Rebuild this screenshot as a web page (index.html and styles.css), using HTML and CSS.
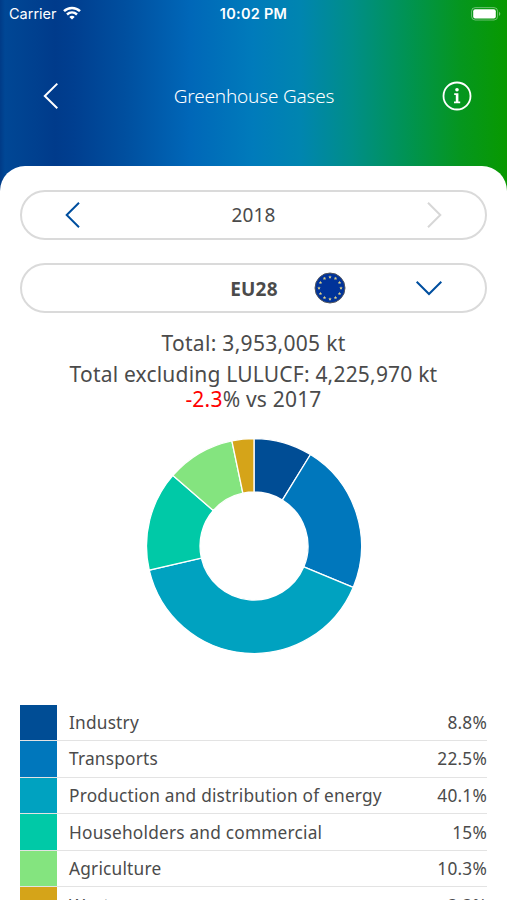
FILE: index.html
```html
<!DOCTYPE html>
<html lang="en">
<head>
    <meta charset="UTF-8">
    <meta name="viewport" content="width=device-width, initial-scale=1.0">
    <title>Greenhouse Gases</title>
    <link rel="stylesheet" href="styles.css">
</head>
<body>
    <header class="header">
        <div class="status-bar">
            <div class="carrier">
                <span class="carrier-name">Carrier</span>
                <svg class="wifi" width="18" height="14" viewBox="0 0 18 14" fill="none" stroke="#fff" stroke-width="2.5">
                    <path d="M1 5.2C5.4 .8 12.6 .8 17 5.2"/>
                    <path d="M4 8.5C6.9 5.9 11.1 5.9 14 8.5"/>
                    <path d="M9 13.6L6.3 10.9C7.8 9.5 10.2 9.5 11.7 10.9Z" fill="#fff" stroke="none"/>
                </svg>
            </div>
            <span class="time">10:02 PM</span>
            <div class="battery">
                <svg width="30" height="14" viewBox="0 0 30 14">
                    <rect x=".6" y=".6" width="26" height="12.4" rx="3.6" fill="none" stroke="#fff" stroke-opacity=".4"/>
                    <rect x="2.2" y="2.2" width="22.6" height="9.2" rx="2" fill="#fff"/>
                    <path d="M28 4.7C29.8 5.5 29.8 8.1 28 8.9Z" fill="#fff" fill-opacity=".45"/>
                </svg>
            </div>
        </div>
        <nav class="nav">
            <svg class="back" width="16" height="28" viewBox="0 0 16 28" fill="none" stroke="#fff" stroke-width="2">
                <path d="M14.3 1.6L1.8 14L14.3 26.2"/>
            </svg>
            <h1><span class="title">Greenhouse Gases</span></h1>
            <svg class="info" width="30" height="30" viewBox="0 0 30 30">
                <circle cx="15" cy="15" r="13.5" fill="none" stroke="#fff" stroke-width="1.8"/>
                <circle cx="15" cy="8.8" r="1.8" fill="#fff"/>
                <path d="M12.2 12.2H16.4V20.5H18.2V22.3H12V20.5H13.8V14H12.2Z" fill="#fff"/>
            </svg>
        </nav>
    </header>

    <main class="sheet">
        <div class="picker">
            <svg width="16" height="28" viewBox="0 0 16 28" fill="none" stroke="#004f9f" stroke-width="2">
                <path d="M14 1.7L1.7 14L14 26.3"/>
            </svg>
            <span class="year">2018</span>
            <svg width="16" height="28" viewBox="0 0 16 28" fill="none" stroke="#d7d7d7" stroke-width="2">
                <path d="M2 1.7L14.3 14L2 26.3"/>
            </svg>
        </div>
        <div class="picker picker-region">
            <span class="region">EU28</span>
            <svg class="flag" width="32" height="32" viewBox="-16 -16 32 32">
                <circle r="15" fill="#039" stroke="#53565d" stroke-width="1"/>
                <g id="stars" fill="#d9cf8a"></g>
            </svg>
            <svg class="down" width="28" height="16" viewBox="0 0 28 16" fill="none" stroke="#004f9f" stroke-width="2">
                <path d="M1.7 1.7L14 14L26.3 1.7"/>
            </svg>
        </div>

        <div class="totals">
            <p><span class="total">Total: 3,953,005 kt</span></p>
            <p><span class="excluding">Total excluding LULUCF: 4,225,970 kt</span></p>
            <p class="change"><span class="versus"><span class="negative">-2.3</span>% vs 2017</span></p>
        </div>

        <svg class="chart" id="chart" width="216" height="216" viewBox="-108 -108 216 216"></svg>

        <ul class="legend" id="legend"></ul>
    </main>

    <script src="script.js"></script>
</body>
</html>
```
FILE: styles.css
```css
* {
    box-sizing: border-box;
}
body {
    margin: 0;
    height: 900px;
    overflow: hidden;
    font-family: "Noto Sans", sans-serif;
    color: #4b4b4b;
    background: linear-gradient(90deg, #003b87 0, #004795 5px, #00408f 36px, #003b8b 55px, #003f90 75px, #004f9f 125px, #0067b8 190px, #007bbb 253px, #0085b0 300px, #008e88 352px, #009355 405px, #05961f 460px, #089900 507px);
}
svg {
    display: block;
    flex: none;
}
.header {
    height: 166px;
    color: #fff;
}
.status-bar {
    display: grid;
    grid-template-columns: 1fr auto 1fr;
    align-items: center;
    height: 27px;
    padding: 0 6px 0 9px;
    font-family: Inter, sans-serif;
    font-size: 14.5px;
}
.carrier {
    display: flex;
    align-items: center;
    gap: 6px;
}
.carrier-name {
    letter-spacing: 0;
}
.wifi {
    margin-top: -2px;
}
.time {
    margin-left: -3px;
    font-weight: 600;
    letter-spacing: 0.25px;
}
.battery {
    display: flex;
    justify-content: flex-end;
}
.nav {
    display: grid;
    grid-template-columns: 30px 1fr 30px;
    align-items: center;
    margin-top: 54px;
    padding: 0 35px 0 43px;
}
.nav h1 {
    margin: 0;
    padding-right: 7px;
    font-size: 19px;
    font-weight: 300;
    line-height: 30px;
    letter-spacing: -0.2px;
    text-align: center;
}
.sheet {
    height: 734px;
    padding: 24px 20px 0;
    background: #fff;
    border-radius: 25px 25px 0 0;
    overflow: hidden;
}
.picker {
    display: flex;
    align-items: center;
    justify-content: space-between;
    height: 50px;
    padding: 0 43px;
    border: 2px solid #dadada;
    border-radius: 25px;
    font-size: 19px;
}
.year {
    letter-spacing: 0.1px;
}
.picker-region {
    display: grid;
    grid-template-columns: 1fr auto 1fr;
    margin-top: 23px;
    padding-right: 42px;
    position: relative;
}
.region {
    grid-column: 2;
    padding-top: 1px;
    font-weight: 700;
    letter-spacing: 0.2px;
}
.flag {
    position: absolute;
    left: 292px;
    top: 7px;
}
.down {
    justify-self: end;
}
.totals {
    margin-top: 15px;
    font-size: 21px;
    line-height: 31px;
    letter-spacing: 0.2px;
    text-align: center;
    white-space: nowrap;
}
.totals p {
    margin: 0;
}
.total {
    letter-spacing: 0.3px;
}
.totals .change {
    line-height: 19px;
}
.negative {
    color: #f00;
}
.chart {
    margin: 28.5px auto 0;
}
.legend {
    margin: 51px 0 0;
    padding: 0;
    list-style: none;
    font-size: 17.3px;
    letter-spacing: 0.2px;
}
.legend li {
    display: flex;
    align-items: center;
    height: 36.6px;
    border-bottom: 1.4px solid #e3e3e3;
}
.swatch {
    width: 37px;
    height: 100%;
    margin-right: 12px;
}
.value {
    margin-left: auto;
}
```
FILE: script.js
```js
const sectors = [
    { name: "Industry", value: 8.8, color: "#004d95" },
    { name: "Transports", value: 22.5, color: "#0077bc" },
    { name: "Production and distribution of energy", value: 40.1, color: "#00a2c0" },
    { name: "Householders and commercial", value: 15, color: "#00c9a7" },
    { name: "Agriculture", value: 10.3, color: "#84e47f" },
    { name: "Waste", value: 3.3, color: "#d5a419" }
];

function point(radius, share) {
    const angle = share / 100 * 2 * Math.PI;
    return (radius * Math.sin(angle)).toFixed(2) + " " + (-radius * Math.cos(angle)).toFixed(2);
}

let start = 0;
let slices = "";
let rows = "";
sectors.forEach(sector => {
    const end = start + sector.value;
    slices += `<path fill="${sector.color}" stroke="#fff" stroke-width="1.3" d="M${point(107.5, start)}A107.5 107.5 0 0 1 ${point(107.5, end)}L${point(54, end)}A54 54 0 0 0 ${point(54, start)}Z"/>`;
    rows += `<li><span class="swatch" style="background:${sector.color}"></span><span class="name">${sector.name}</span><span class="value">${sector.value}%</span></li>`;
    start = end;
});
document.getElementById("chart").innerHTML = slices;
document.getElementById("legend").innerHTML = rows;

let stars = "";
for (let i = 0; i < 12; i++) {
    stars += `<path transform="rotate(${i * 30}) translate(0 -11) rotate(${-i * 30})" d="M0 -1.8L.5 -.6H1.7L.8 .3L1.1 1.6L0 .9L-1.1 1.6L-.8 .3L-1.7 -.6H-.5Z"/>`;
}
document.getElementById("stars").innerHTML = stars;
```
